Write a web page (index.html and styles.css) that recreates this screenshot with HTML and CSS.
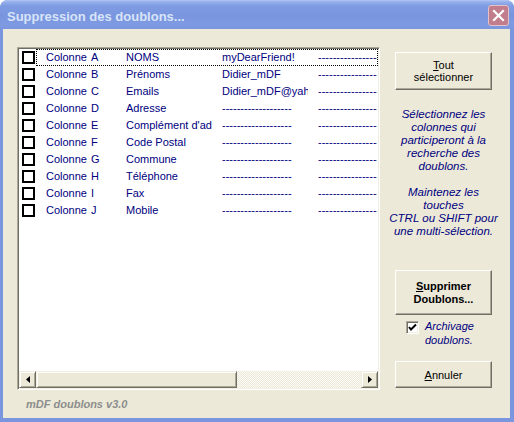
FILE: index.html
```html
<!DOCTYPE html>
<html>
<head>
    <title>Suppression des doublons...</title>
    <link rel="stylesheet" href="styles.css">
</head>
<body>
<div class="window">
    <div class="titlebar">
        <span class="title">Suppression des doublons...</span>
        <span class="close">
            <svg width="21" height="21" viewBox="0 0 21 21"><path d="M6 6L15 15M15 6L6 15" stroke="#fff" stroke-width="2.2" stroke-linecap="square"/></svg>
        </span>
    </div>
    <div class="client">
        <div class="left">
            <div class="listbox">
                <div class="rows">
                    <div class="row focus">
                        <span class="check"></span>
                        <div class="cells"><span class="c1">Colonne</span><span class="c2">A</span><span class="c3">NOMS</span><span class="c4">myDearFriend!</span><span class="c5">------------------------------</span></div>
                    </div>
                    <div class="row">
                        <span class="check"></span>
                        <div class="cells"><span class="c1">Colonne</span><span class="c2">B</span><span class="c3">Prénoms</span><span class="c4">Didier_mDF</span><span class="c5">------------------------------</span></div>
                    </div>
                    <div class="row">
                        <span class="check"></span>
                        <div class="cells"><span class="c1">Colonne</span><span class="c2">C</span><span class="c3">Emails</span><span class="c4">Didier_mDF@yahoo.fr</span><span class="c5">------------------------------</span></div>
                    </div>
                    <div class="row">
                        <span class="check"></span>
                        <div class="cells"><span class="c1">Colonne</span><span class="c2">D</span><span class="c3">Adresse</span><span class="c4">-------------------</span><span class="c5">------------------------------</span></div>
                    </div>
                    <div class="row">
                        <span class="check"></span>
                        <div class="cells"><span class="c1">Colonne</span><span class="c2">E</span><span class="c3">Complément d'adresse</span><span class="c4">-------------------</span><span class="c5">------------------------------</span></div>
                    </div>
                    <div class="row">
                        <span class="check"></span>
                        <div class="cells"><span class="c1">Colonne</span><span class="c2">F</span><span class="c3">Code Postal</span><span class="c4">-------------------</span><span class="c5">------------------------------</span></div>
                    </div>
                    <div class="row">
                        <span class="check"></span>
                        <div class="cells"><span class="c1">Colonne</span><span class="c2">G</span><span class="c3">Commune</span><span class="c4">-------------------</span><span class="c5">------------------------------</span></div>
                    </div>
                    <div class="row">
                        <span class="check"></span>
                        <div class="cells"><span class="c1">Colonne</span><span class="c2">H</span><span class="c3">Téléphone</span><span class="c4">-------------------</span><span class="c5">------------------------------</span></div>
                    </div>
                    <div class="row">
                        <span class="check"></span>
                        <div class="cells"><span class="c1">Colonne</span><span class="c2">I</span><span class="c3">Fax</span><span class="c4">-------------------</span><span class="c5">------------------------------</span></div>
                    </div>
                    <div class="row">
                        <span class="check"></span>
                        <div class="cells"><span class="c1">Colonne</span><span class="c2">J</span><span class="c3">Mobile</span><span class="c4">-------------------</span><span class="c5">------------------------------</span></div>
                    </div>
                </div>
                <div class="hscroll">
                    <span class="arrow"><svg width="4" height="7" viewBox="0 0 4 7"><path d="M4 0V7L0 3.5Z" fill="#000"/></svg></span>
                    <span class="thumb"></span>
                    <span class="track"></span>
                    <span class="arrow"><svg width="4" height="7" viewBox="0 0 4 7"><path d="M0 0V7L4 3.5Z" fill="#000"/></svg></span>
                </div>
            </div>
            <div class="version">mDF doublons v3.0</div>
        </div>
        <div class="right">
            <button class="btn btn-tout"><u>T</u>out<br>sélectionner</button>
            <div class="note">
                Sélectionnez les<br>
                colonnes qui<br>
                participeront à la<br>
                recherche des<br>
                doublons.<br>
                <br>
                Maintenez les<br>
                touches<br>
                CTRL ou SHIFT pour<br>
                une multi-sélection.
            </div>
            <button class="btn btn-suppr"><u>S</u>upprimer<br>Doublons...</button>
            <div class="archive">
                <span class="archive-box">
                    <svg width="9" height="9" viewBox="0 0 9 9"><path d="M1 4L3 6.5L8 1.5" stroke="#000" stroke-width="2" fill="none"/></svg>
                </span>
                <span class="archive-label">Archivage<br>doublons.</span>
            </div>
            <button class="btn btn-annuler"><u>A</u>nnuler</button>
        </div>
    </div>
</div>
</body>
</html>
```

FILE: styles.css
```css
html, body {
    margin: 0;
    height: 100%;
    background: #fff;
}

body {
    font-family: "Liberation Sans", Arial, sans-serif;
    font-size: 11px;
}

.window {
    width: 514px;
    height: 422px;
    box-sizing: border-box;
    display: flex;
    flex-direction: column;
    padding: 0 4px 4px 3px;
    background: #7a96df;
    border-radius: 8px 8px 0 0;
}

.titlebar {
    height: 29px;
    flex-shrink: 0;
    display: flex;
    align-items: center;
    justify-content: space-between;
    margin: 0 -4px 0 -3px;
    padding: 1px 5px 0 7px;
    box-sizing: border-box;
    border-radius: 8px 8px 0 0;
    background: linear-gradient(#b4c8f4 0, #94afec 2px, #7f9be2 6px, #7995df 16px, #7e9ae2 24px, #7a96df 29px);
}

.title {
    padding-top: 2px;
    font-size: 13px;
    font-weight: bold;
    color: #d8e4f8;
}

.close {
    width: 21px;
    height: 21px;
    box-sizing: border-box;
    display: flex;
    border: 1px solid #e3c2cc;
    border-radius: 3px;
    background: #c27d8c;
    overflow: hidden;
}

.close svg {
    margin: -1px;
}

.client {
    flex: 1;
    display: flex;
    padding: 18px 0 0 14px;
    background: #ece9d8;
}

.left {
    width: 363px;
    display: flex;
    flex-direction: column;
}

.listbox {
    height: 343px;
    box-sizing: border-box;
    display: flex;
    flex-direction: column;
    background: #fff;
    border: 1px solid;
    border-color: #aca899 #fff #fff #aca899;
    box-shadow: inset 1px 1px #716f64, inset -1px -1px #f1efe2;
    padding: 1px;
    overflow: hidden;
}

.rows {
    flex: 1;
    overflow: hidden;
    color: #000080;
}

.row {
    height: 17px;
    display: flex;
    align-items: center;
}

.check {
    width: 13px;
    height: 13px;
    box-sizing: border-box;
    flex-shrink: 0;
    margin: 0 1px 0 3px;
    border: 2px solid #000;
    background: #fff;
}

.cells {
    flex: 1;
    min-width: 0;
    height: 17px;
    box-sizing: border-box;
    display: flex;
    padding-left: 9px;
    border: 1px solid transparent;
    line-height: 14px;
    white-space: nowrap;
    overflow: hidden;
}

.focus .cells {
    border: 1px dotted #000;
}

.cells span {
    flex-shrink: 0;
    overflow: hidden;
}

.c1 { width: 45px; }
.c2 { width: 35px; }
.c3, .c4 { width: 86px; margin-right: 10px; }
.c5 { width: 140px; }

.hscroll {
    height: 17px;
    flex-shrink: 0;
    display: flex;
}

.arrow, .thumb {
    box-sizing: border-box;
    background: #ece9d8;
    border: 1px solid;
    border-color: #f1efe2 #716f64 #716f64 #f1efe2;
    box-shadow: inset 1px 1px #fff, inset -1px -1px #aca899;
}

.arrow {
    width: 17px;
    display: flex;
    align-items: center;
    justify-content: center;
}

.thumb {
    width: 201px;
}

.track {
    flex: 1;
    background: repeating-conic-gradient(#ece9d8 0 25%, #fbfaf6 0 50%) 0 0 / 2px 2px;
}

.version {
    margin-top: 8px;
    padding-left: 9px;
    line-height: 13px;
    font-weight: bold;
    font-style: italic;
    color: #8d8d8d;
}

.right {
    width: 97px;
    margin-left: 15px;
    display: flex;
    flex-direction: column;
}

.btn {
    width: 97px;
    padding: 0;
    box-sizing: border-box;
    font-family: "Liberation Sans", Arial, sans-serif;
    font-size: 11px;
    color: #000;
    background: #ece9d8;
    border: 1px solid;
    border-color: #fff #716f64 #716f64 #fff;
    box-shadow: inset -1px -1px #aca899;
}

.btn-tout {
    height: 38px;
    margin-top: 5px;
    line-height: 12px;
}

.note {
    margin: 18px -10px 0 -10px;
    line-height: 13px;
    font-size: 11.5px;
    font-style: italic;
    text-align: center;
    color: #000080;
}

.btn-suppr {
    height: 45px;
    margin-top: 32px;
    line-height: 13px;
    font-weight: bold;
}

.archive {
    display: flex;
    align-items: flex-start;
    margin-top: 4px;
}

.archive-box {
    width: 13px;
    height: 13px;
    box-sizing: border-box;
    flex-shrink: 0;
    display: flex;
    align-items: center;
    justify-content: center;
    margin: 2px 6px 0 11px;
    background: #fff;
    border: 1px solid;
    border-color: #aca899 #fff #fff #aca899;
    box-shadow: inset 1px 1px #716f64, inset -1px -1px #f1efe2;
}

.archive-label {
    line-height: 14px;
    font-style: italic;
    color: #000080;
}

.btn-annuler {
    height: 27px;
    margin-top: 14px;
}
```
